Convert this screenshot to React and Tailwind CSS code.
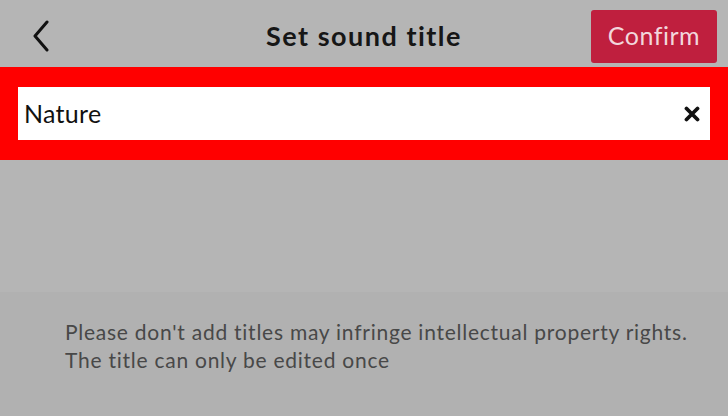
import React, { useState } from 'react';

function App() {
  const [title, setTitle] = useState('Nature');

  return (
    <div className="w-[728px] h-[416px] bg-[#b5b5b5] flex flex-col overflow-hidden" style={{ fontFamily: '"Lato", "Open Sans", sans-serif' }}>
      {/* Header */}
      <div className="h-[67px] flex items-center pt-[5px]">
        <div className="w-[137px] flex items-center pl-[32px]">
          <button className="h-[40px] flex items-center">
            <svg width="18" height="32" viewBox="0 0 18 32" fill="none">
              <path d="M15 2 L3 16 L15 30" stroke="#111" strokeWidth="3" strokeLinecap="round" strokeLinejoin="round" />
            </svg>
          </button>
        </div>
        <h1 className="flex-1 text-center text-[27px] font-bold text-[#161616] tracking-[1.5px]">Set sound title</h1>
        <div className="w-[137px] flex justify-end pr-[11px]">
          <button className="w-[127px] h-[53px] rounded-[3px] bg-[#bf1f3e] text-[#f2d6dc] text-[25px] tracking-[0.5px]">
            Confirm
          </button>
        </div>
      </div>

      {/* Title input, highlighted */}
      <div className="h-[93px] bg-[#ff0000] px-[18px] flex items-center">
        <div className="w-full h-[53px] bg-white flex items-center pl-[6px] pr-[10px]">
          <input
            value={title}
            onChange={(e) => setTitle(e.target.value)}
            className="flex-1 outline-none text-[25px] text-[#111] bg-transparent tracking-[0.3px]"
          />
          <button onClick={() => setTitle('')} className="w-[16px] h-[16px] flex items-center justify-center">
            <svg width="16" height="16" viewBox="0 0 16 16">
              <path d="M2.5 2.5 L13.5 13.5 M13.5 2.5 L2.5 13.5" stroke="#111" strokeWidth="3.8" strokeLinecap="round" />
            </svg>
          </button>
        </div>
      </div>

      <div className="h-[132px]" />

      {/* Notice */}
      <div className="flex-1 bg-[#b1b1b1] pl-[65px] pt-[26px]">
        <p className="text-[21px] leading-[28px] text-[#484848] tracking-[0.75px]">
          Please don't add titles may infringe intellectual property rights.
          <br />
          The title can only be edited once
        </p>
      </div>
    </div>
  );
}

export default App;
